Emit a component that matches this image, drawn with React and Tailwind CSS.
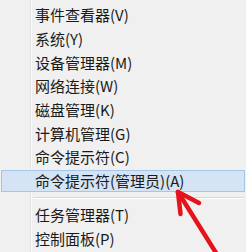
const items = [
  '事件查看器(V)',
  '系统(Y)',
  '设备管理器(M)',
  '网络连接(W)',
  '磁盘管理(K)',
  '计算机管理(G)',
  '命令提示符(C)',
  '命令提示符(管理员)(A)',
]

const lower = ['任务管理器(T)', '控制面板(P)']

function Row({ label, active }) {
  if (active) {
    return (
      <div className="h-[23.7px] pt-[1px] pb-[0.7px] pl-[1px] pr-[1px]">
        <div className="h-full flex items-center pl-[33px] bg-[#d4e4f4] border border-[#a7c5e6]">
          {label}
        </div>
      </div>
    )
  }
  return <div className="h-[23.7px] flex items-center pl-[35px]">{label}</div>
}

export default function App() {
  return (
    <div
      className="relative w-[246px] h-[252px] overflow-hidden bg-[#f0f0f0] text-[#1a1a1a] text-[15px] leading-none"
      style={{ fontFamily: '"Noto Sans CJK SC", "Noto Sans", sans-serif' }}
    >
      {/* gutter line */}
      <div className="absolute left-[30px] top-0 bottom-0 w-[2px] border-l border-[#e2e2e2] bg-white/70" />

      <div className="relative pt-[3px]">
        {items.map((label, i) => (
          <Row key={label} label={label} active={i === items.length - 1} />
        ))}
        <div className="h-[10px] pt-[4px] pl-[33px] pr-[2px]">
          <div className="border-t border-[#d8d8d8] border-b border-b-white" />
        </div>
        {lower.map((label) => (
          <Row key={label} label={label} />
        ))}
      </div>

      {/* red arrow */}
      <svg className="absolute left-0 top-0" width="246" height="252" viewBox="0 0 246 252">
        <g stroke="#e3141b" strokeWidth="4.5" strokeLinecap="round" fill="none">
          <line x1="178" y1="192" x2="218" y2="256" />
          <line x1="178" y1="192" x2="199" y2="203" />
          <line x1="178" y1="192" x2="180.5" y2="214" />
        </g>
      </svg>
    </div>
  )
}
